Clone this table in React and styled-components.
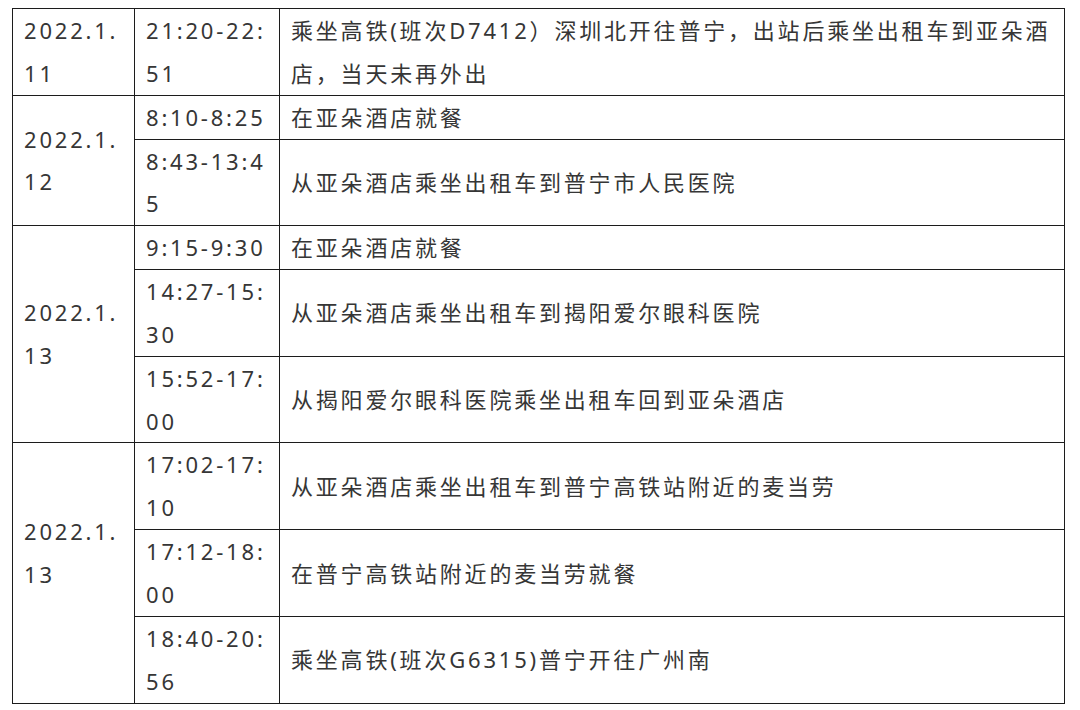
import React from 'react'
import styled, { createGlobalStyle } from "styled-components";

const GlobalStyle = createGlobalStyle`
  body {
    margin: 0;
    background: #fff;
  }
`;

const Page = styled.div`
  padding: 8px 0 0 12px;
`;

const Table = styled.table`
  border-collapse: collapse;
  table-layout: fixed;
  width: 1053px;
  font-family: "Noto Sans", "Noto Sans CJK SC", sans-serif;
  font-size: 22px;
  letter-spacing: 2.8px;
  color: #363636;
`;

const Cell = styled.td`
  border: 1px solid #1c1c1c;
  padding: 0 8px ${p => p.$lift ? p.$lift + 'px' : '0'} 11px;
  line-height: 42.85px;
  vertical-align: middle;
  word-break: break-all;
`;

const schedule = [
  {
    date: '2022.1.11',
    items: [
      ['21:20-22:51', '乘坐高铁(班次D7412）深圳北开往普宁，出站后乘坐出租车到亚朵酒店，当天未再外出'],
    ],
  },
  {
    date: '2022.1.12',
    items: [
      ['8:10-8:25', '在亚朵酒店就餐'],
      ['8:43-13:45', '从亚朵酒店乘坐出租车到普宁市人民医院'],
    ],
  },
  {
    date: '2022.1.13',
    items: [
      ['9:15-9:30', '在亚朵酒店就餐'],
      ['14:27-15:30', '从亚朵酒店乘坐出租车到揭阳爱尔眼科医院'],
      ['15:52-17:00', '从揭阳爱尔眼科医院乘坐出租车回到亚朵酒店'],
    ],
  },
  {
    date: '2022.1.13',
    lift: 40,
    items: [
      ['17:02-17:10', '从亚朵酒店乘坐出租车到普宁高铁站附近的麦当劳'],
      ['17:12-18:00', '在普宁高铁站附近的麦当劳就餐'],
      ['18:40-20:56', '乘坐高铁(班次G6315)普宁开往广州南'],
    ],
  },
];

function App() {
  return (
    <Page>
      <GlobalStyle />
      <Table>
        <colgroup>
          <col style={{ width: 122 }} />
          <col style={{ width: 145 }} />
          <col />
        </colgroup>
        <tbody>
          {schedule.map((day, di) =>
            day.items.map((item, ii) => (
              <tr key={di + '-' + ii}>
                {ii === 0 && (
                  <Cell rowSpan={day.items.length} $lift={day.lift}>{day.date}</Cell>
                )}
                <Cell>{item[0]}</Cell>
                <Cell>{item[1]}</Cell>
              </tr>
            ))
          )}
        </tbody>
      </Table>
    </Page>
  )
}

export default App
